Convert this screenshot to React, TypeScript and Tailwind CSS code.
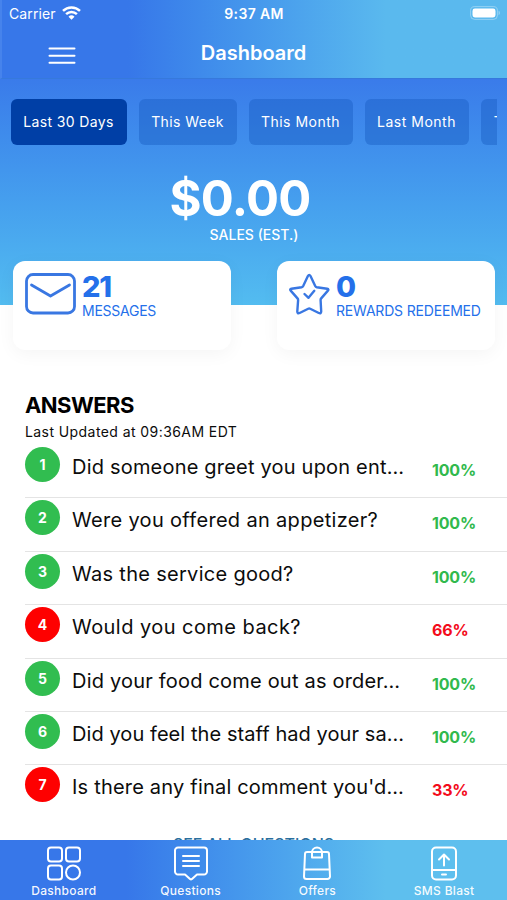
import type { ReactNode } from "react";
import clsx from "clsx";

const ranges = [
  { label: "Last 30 Days", width: "w-[116px]", tracking: "tracking-[0.35px]" },
  { label: "This Week", width: "w-[98px]", tracking: "tracking-[0.4px]" },
  { label: "This Month", width: "w-[104px]", tracking: "tracking-[0.5px]" },
  { label: "Last Month", width: "w-[104px]", tracking: "tracking-[0.5px]" },
  { label: "This Year", width: "w-[92px]", tracking: "tracking-[0.4px]" },
];

const answers = [
  { text: "Did someone greet you upon ent…", score: 100, tracking: "tracking-[0.2px]" },
  { text: "Were you offered an appetizer?", score: 100, tracking: "tracking-[0.32px]" },
  { text: "Was the service good?", score: 100, tracking: "tracking-[0.3px]" },
  { text: "Would you come back?", score: 66, tracking: "tracking-[0.45px]" },
  { text: "Did your food come out as order…", score: 100, tracking: "tracking-[0.2px]" },
  { text: "Did you feel the staff had your sa…", score: 100, tracking: "tracking-[0.07px]" },
  { text: "Is there any final comment you'd…", score: 33, tracking: "tracking-[0.2px]" },
];

function StatusBar() {
  return (
    <div className="grid h-7 grid-cols-3 items-center pr-[6px] pl-[9px]">
      <div className="flex items-center gap-[6px]">
        <span className="text-[14px] leading-7 tracking-[0.1px]">Carrier</span>
        <svg className="-mt-[2px]" width="19" height="14" viewBox="0 0 19 14" fill="none" stroke="currentColor" strokeWidth="2.5">
          <path d="M1 4.9a12.2 12.2 0 0 1 17 0" />
          <path d="M4.1 8.1a7.8 7.8 0 0 1 10.8 0" />
          <path d="M9.5 13.8 6.5 10.7a4.3 4.3 0 0 1 6 0z" fill="currentColor" stroke="none" />
        </svg>
      </div>
      <span className="-ml-[2px] text-center text-[14px] leading-6 font-semibold tracking-[0.35px] whitespace-nowrap">9:37 AM</span>
      <svg className="-mt-[2px] justify-self-end" width="31" height="14" viewBox="0 0 31 14" fill="none">
        <rect x="0.6" y="0.6" width="26.8" height="12.8" rx="4" stroke="white" strokeOpacity="0.35" />
        <rect x="2.5" y="2.5" width="23" height="9" rx="2.4" fill="white" />
        <path d="M28.6 4.8c1.6.6 1.6 3.8 0 4.4z" fill="white" fillOpacity="0.4" />
      </svg>
    </div>
  );
}

function Header() {
  return (
    <header className="h-[79px] shrink-0 border-b border-[#3679dc] border-l-2 border-l-[#4683ec] bg-linear-to-r from-[#3777e9] from-25% to-[#5ab9ee] to-76% text-white">
      <div className="-ml-[2px]">
        <StatusBar />
        <div className="grid h-[50px] grid-cols-[1fr_auto_1fr] items-center">
          <svg className="mt-[5px] ml-12" width="28" height="20" viewBox="0 0 28 20" stroke="white" strokeWidth="2" strokeLinecap="round">
            <path d="M1.5 2.5h25M1.5 9.7h25M1.5 16.7h25" />
          </svg>
          <h1 className="text-[20px] font-semibold">Dashboard</h1>
        </div>
      </div>
    </header>
  );
}

function StatCard({ icon, value, label }: { icon: ReactNode; value: string; label: ReactNode }) {
  return (
    <div className="flex h-[89px] w-[218px] rounded-[12px] bg-white pt-[12px] pl-3 text-[#2470ea] shadow-[0_4px_18px_rgba(0,0,0,0.045)]">
      {icon}
      <div className="whitespace-nowrap">
        <div className="text-[29px] leading-[27px] font-extrabold tracking-[-1.2px]">{value}</div>
        <div className="text-[14px] leading-[21px]">{label}</div>
      </div>
    </div>
  );
}

function Hero() {
  return (
    <section className="h-[226px] shrink-0 bg-linear-to-b from-[#3a7bea] to-[#53bcf0] pt-5 text-white">
      <div className="mr-[10px] ml-[11px] flex gap-3 overflow-hidden">
        {ranges.map((r, i) => (
          <button
            key={r.label}
            className={clsx(
              "flex h-[46px] shrink-0 items-center justify-center rounded-[6px] pr-px pb-px text-[14px] whitespace-nowrap",
              r.width,
              r.tracking,
              i === 0 ? "bg-[#003fa6]" : "bg-[#1558bd]/40",
            )}
          >
            {r.label}
          </button>
        ))}
      </div>
      <div className="mt-[29px] pr-[27px] text-center text-[49px] leading-[50px] font-bold">
        <span className="tracking-[-0.7px]">$0.00</span>
      </div>
      <div className="mt-px pl-px text-center text-[14px] leading-5 font-medium">SALES (EST.)</div>
    </section>
  );
}

function Answers() {
  return (
    <section className="mt-[41px] ml-[25px] shrink-0 text-[#0c0c0c]">
      <h2 className="text-[22px] leading-[28px] font-bold text-black">
        <span className="tracking-[-0.55px]">ANSWERS</span>
      </h2>
      <p className="text-[14px] leading-[26px]">
        <span className="tracking-[0.42px]">Last Updated at 09:36AM EDT</span>
      </p>
      <ul>
        {answers.map((a, i) => (
          <li
            key={a.text}
            className={clsx("flex h-[53.4px] pt-[2px]", i < answers.length - 1 && "border-b border-[#e4e4e4]")}
          >
            <span
              className={clsx(
                "flex size-[35px] shrink-0 items-center justify-center rounded-full text-[14px] font-bold text-white",
                a.score === 100 ? "bg-[#31bd50]" : "bg-[#fe0000]",
              )}
            >
              {i + 1}
            </span>
            <span className={clsx("ml-[12px] w-[360px] text-[20px] leading-[40px] whitespace-nowrap", a.tracking)}>
              {a.text}
            </span>
            <span
              className={clsx(
                "text-[16px] leading-[46px] font-bold tracking-[-0.2px]",
                a.score === 100 ? "text-[#31b94d]" : "text-[#f30b1b]",
              )}
            >
              {a.score}%
            </span>
          </li>
        ))}
      </ul>
      <div className="mt-[13px] pr-[25px] text-center text-[16px] leading-6 font-medium text-[#2a6f9e]">
        SEE ALL QUESTIONS
      </div>
    </section>
  );
}

function Tab({ label, children }: { label: string; children: ReactNode }) {
  return (
    <div className="flex flex-1 flex-col items-center pt-[5px] pl-px">
      <svg width="36" height="36" viewBox="0 0 36 36" fill="none" stroke="white" strokeWidth="2" strokeLinecap="round" strokeLinejoin="round">
        {children}
      </svg>
      <span className="mt-px text-[12px] leading-[18px] font-medium tracking-[0.3px]">{label}</span>
    </div>
  );
}

function TabBar() {
  return (
    <nav className="z-10 flex h-[60px] shrink-0 bg-linear-to-r from-[#3777e9] from-25% to-[#5ebfee] to-76% text-white/95">
      <Tab label="Dashboard">
        <rect x="2" y="2.5" width="14" height="14" rx="3" />
        <rect x="20" y="2.5" width="14" height="14" rx="3" />
        <rect x="2" y="20.5" width="14" height="14" rx="3" />
        <circle cx="27" cy="27.5" r="7" />
      </Tab>
      <Tab label="Questions">
        <path d="M5 2.5h26a3 3 0 0 1 3 3v21a3 3 0 0 1-3 3h-7l-5 4.5q-1 .8-2 0l-5-4.5H5a3 3 0 0 1-3-3v-21a3 3 0 0 1 3-3z" />
        <path d="M10 11h16M10 16h16M10 21h16" />
      </Tab>
      <Tab label="Offers">
        <path d="M13 7H8a2 2 0 0 0-2 2L5 31.5A2.500 2.500 0 0 0 7.500 34h21a2.500 2.500 0 0 0 2.500-2.500L30 9a2 2 0 0 0-2-2h-5M5.500 24.500h25" />
        <path d="M13 12.500v-5a5 5 0 0 1 10 0v5z" />
        <path d="M13 7h10" />
      </Tab>
      <Tab label="SMS Blast">
        <rect x="6" y="2.500" width="24" height="32" rx="4" />
        <path d="M6 25h24M16 29.500h4M18 20.500V10M13 14.500l5-5 5 5" />
      </Tab>
    </nav>
  );
}

export default function App() {
  return (
    <div className="flex h-[900px] w-[507px] flex-col overflow-hidden bg-white font-[Inter,sans-serif]">
      <Header />
      <main className="flex min-h-0 flex-1 flex-col overflow-hidden">
        <Hero />
        <div className="-mt-[44px] flex shrink-0 justify-between pr-3 pl-[13px]">
          <StatCard
            icon={
              <svg className="mr-[6px] shrink-0" width="51" height="42" viewBox="0 0 51 42" fill="none" stroke="#3977e2" strokeWidth="2.800" strokeLinecap="round" strokeLinejoin="round">
                <rect x="1.500" y="1.500" width="48" height="38.500" rx="6.500" />
                <path d="M6.500 12 25.500 23 44.500 12" />
              </svg>
            }
            value="21"
            label={<span className="tracking-[-0.25px]">MESSAGES</span>}
          />
          <StatCard
            icon={
              <svg className="mr-[6px] shrink-0" width="41" height="42" viewBox="0 0 41 42" fill="none" stroke="#3977e2" strokeWidth="2.400" strokeLinecap="round" strokeLinejoin="round">
                <path d="M18.900 3q1.300-2.200 2.600 0l4.700 10q.5 1 1.600 1.200l10.300 1.500q2.200.5.600 2.200l-6.500 7.500q-.7.800-.6 1.900l.6 11.200q-.1 2.500-2.400 1.500l-8.600-4.300q-1-.5-2 0L10.600 40q-2.300 1-2.300-1.500l.8-11.200q.1-1.100-.6-1.900L1.900 17.900q-1.600-1.700.6-2.200l10.100-1.500q1.100-.2 1.600-1.200z" />
                <path d="m15.500 21 4 3.800 5.800-7" />
              </svg>
            }
            value="0"
            label={<span className="tracking-[-0.18px]">REWARDS REDEEMED</span>}
          />
        </div>
        <Answers />
      </main>
      <TabBar />
    </div>
  );
}
